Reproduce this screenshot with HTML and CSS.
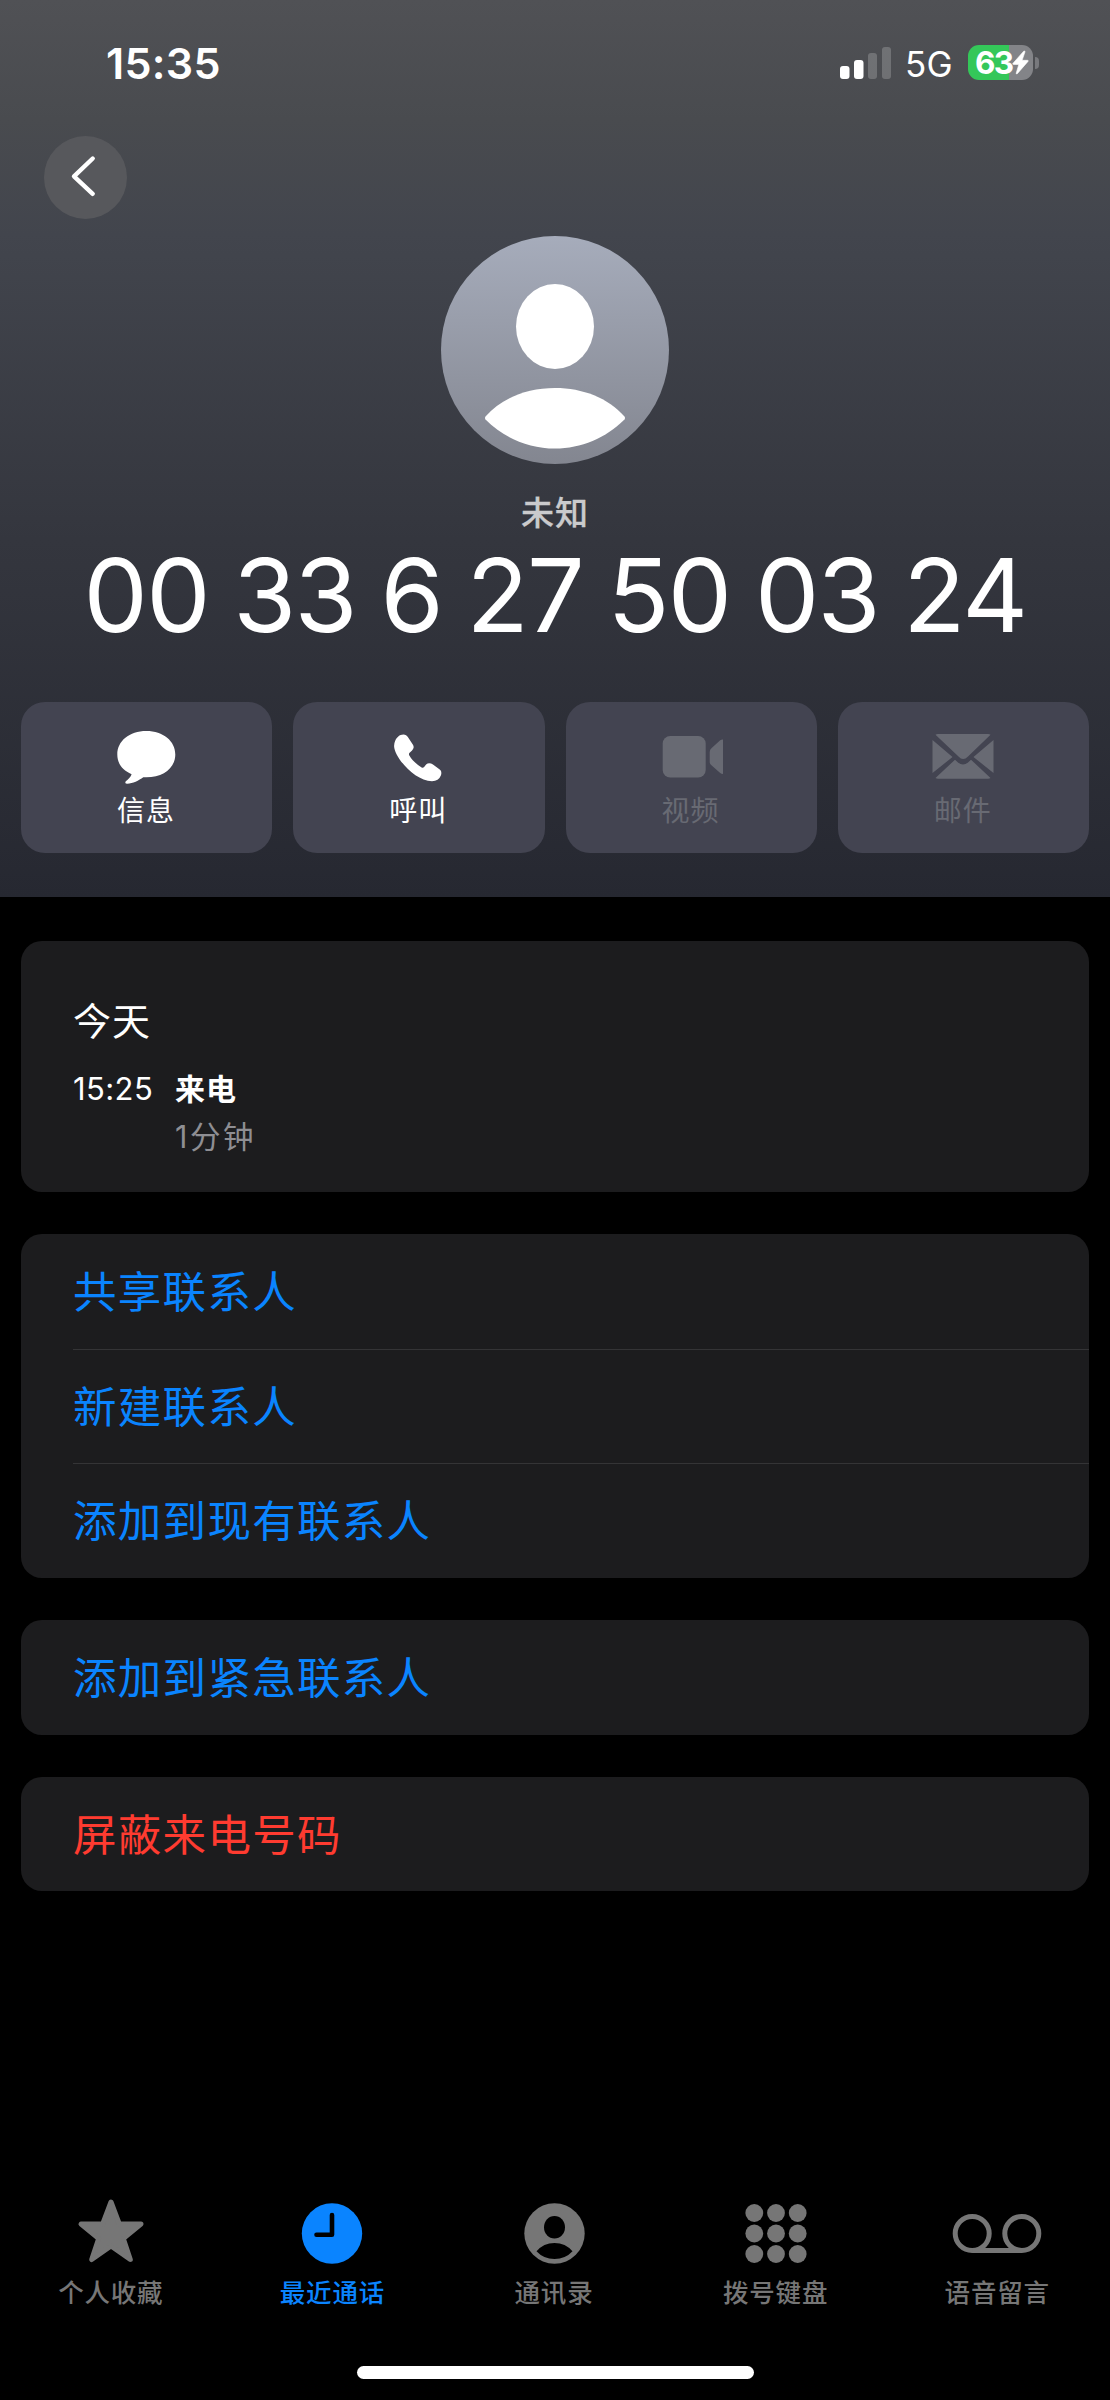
FILE: index.html
```html
<!DOCTYPE html>
<html lang="zh-CN">
<head>
<meta charset="utf-8">
<title>通话详情</title>
<link rel="stylesheet" href="styles.css">
</head>
<body>
<div class="screen">
  <header class="hero">
    <div class="status">
      <span class="time">15:35</span>
      <div class="indicators">
        <svg class="signal" width="51" height="34" viewBox="0 0 51 34" fill="#fff">
          <rect x="0" y="20" width="9.5" height="13" rx="3"/>
          <rect x="14" y="14" width="9.5" height="19" rx="3"/>
          <g fill-opacity=".2"><rect x="28" y="7" width="9" height="26" rx="3"/><rect x="42" y="1" width="9" height="32" rx="3"/></g>
        </svg>
        <span class="network">5G</span>
        <div class="battery">
          <span class="level">63</span>
          <svg width="17" height="25" viewBox="0 0 17 25"><path d="M11.7 1.2 1 13.3Q.3 14.4 1.6 14.4H6.8L4.2 23.2Q4.2 24.4 5.3 23.7L16 11.4Q16.7 10.3 15.4 10.3H10.1L13 1.8Q12.9.4 11.7 1.2Z" fill="#fff" stroke="#fff" stroke-width=".6"/></svg>
        </div>
        <span class="battery-cap"></span>
      </div>
    </div>
    <button class="back" aria-label="返回">
      <svg width="83" height="83" viewBox="0 0 83 83"><path d="M48.7 22.500 30 40.300 48.700 57.800" fill="none" stroke="#fff" stroke-width="4.4" stroke-linecap="round" stroke-linejoin="round"/></svg>
    </button>
    <svg class="avatar" width="228" height="228" viewBox="0 0 228 228">
      <defs><linearGradient id="avatar-fill" x2="0" y2="1"><stop stop-color="#a6acbb"/><stop offset="1" stop-color="#838690"/></linearGradient></defs>
      <circle cx="114" cy="114" r="114" fill="url(#avatar-fill)"/>
      <ellipse cx="114" cy="90.5" rx="39" ry="42.5" fill="#fff"/>
      <path d="M44.500 180.500C61 162 86 152 114 152S167 162 183.500 180.500Q184.500 182 183.500 183.500C165 202 140 212.500 114 212.500S63 202 44.500 183.500Q43.500 182 44.500 180.500Z" fill="#fff"/>
    </svg>
    <div class="caller">未知</div>
    <h1 class="number">00 33 6 27 50 03 24</h1>
    <div class="actions">
      <button class="action">
        <svg width="64" height="60" viewBox="0 0 64 60"><path d="M32 4C49 4 61 14 61 27.500S49 50.300 32 50.300H29C24.500 53.500 18.500 56.700 13 56.700Q10 56.700 11.500 54.300C14 52.500 16.500 50 17.300 47.300 8 43 3 36.500 3 27.500 3 14 15 4 32 4Z" transform="translate(-.7 0)" fill="currentColor"/></svg>
        <span>信息</span>
      </button>
      <button class="action">
        <svg width="64" height="60" viewBox="0 0 64 60"><path d="M9.500 15C11 11 14 8 18 8 20 8 21.500 9 23 11.500L27.500 18.500C29 21 28.500 23 26.500 25L24 27.500Q23.300 28.500 24 30C26.500 34.500 31.500 39.500 36.500 42.500Q37.800 43.200 39 42L41 39.500C43 37.500 45.500 37.800 48 39.500L54.500 44.500C56.500 46 57 48 56 51 54.500 54.800 51.500 57 47 57 29 56.500 9 32 8.500 20Q8.500 17 9.500 15Z" transform="translate(-1.300 -.2) scale(.985 .955)" fill="currentColor"/></svg>
        <span>呼叫</span>
      </button>
      <button class="action disabled">
        <svg width="64" height="60" viewBox="0 0 64 60" fill="currentColor"><g transform="translate(2.700 -.5)"><rect x="1" y="9.500" width="43" height="41.500" rx="7.500"/><path d="M48 25.500Q48 23 50 21.500L58.500 13.800Q62.500 11.500 63 16V44.500Q62.500 49 58.500 46.500L50 39Q48 37.500 48 35.500Z"/></g></svg>
        <span>视频</span>
      </button>
      <button class="action disabled">
        <svg width="64" height="60" viewBox="0 0 64 60" fill="currentColor"><path d="M4.500 7.700Q5.500 7 7 7H57Q58.500 7 59.500 7.700L37 29.500Q32 34.500 27.500 29.500Z"/><path d="M1.500 13 1.500 46 21.500 30ZM62.500 13 42.500 30 62.500 46ZM4.500 51 24 32.700 27 35.500Q32 39.500 37 35.500L40 32.700 59.500 51Q58.500 51.700 57 51.700H7Q5.500 51.700 4.500 51Z"/></svg>
        <span>邮件</span>
      </button>
    </div>
  </header>

  <main class="content">
    <section class="card log">
      <h2>今天</h2>
      <div class="entry">
        <time>15:25</time>
        <div class="detail"><strong>来电</strong><span>1分钟</span></div>
      </div>
    </section>
    <section class="card list">
      <a class="row">共享联系人</a>
      <a class="row">新建联系人</a>
      <a class="row">添加到现有联系人</a>
    </section>
    <section class="card list"><a class="row">添加到紧急联系人</a></section>
    <section class="card list"><a class="row danger">屏蔽来电号码</a></section>
  </main>

  <nav class="tabs">
    <a class="tab">
      <svg width="90" height="70" viewBox="0 0 90 70"><path d="M45 7 53.300 29H75L57.300 43.500 64.300 64.500 45 51 25.700 64.500 32.700 43.500 15 29H36.700Z" fill="currentColor" stroke="currentColor" stroke-width="5" stroke-linejoin="round"/></svg>
      <span>个人收藏</span>
    </a>
    <a class="tab active">
      <svg width="90" height="70" viewBox="0 0 90 70"><circle cx="45" cy="38.500" r="30.200" fill="currentColor"/><path d="M45 20V39.700H29.500" fill="none" stroke="#000" stroke-width="4.600" stroke-linecap="round" stroke-linejoin="round"/></svg>
      <span>最近通话</span>
    </a>
    <a class="tab">
      <svg width="90" height="70" viewBox="0 0 90 70"><circle cx="45.500" cy="38.500" r="30.200" fill="currentColor"/><ellipse cx="45.500" cy="32.300" rx="10.500" ry="11.300"/><path d="M27.500 56.300Q34.500 48 45.500 48T63.500 56.300Q56.500 64 45.500 64T27.500 56.300Z"/></svg>
      <span>通讯录</span>
    </a>
    <a class="tab">
      <svg width="90" height="70" viewBox="0 0 90 70" fill="currentColor"><circle cx="23.300" cy="18" r="8.900"/><circle cx="45" cy="18" r="8.900"/><circle cx="66.700" cy="18" r="8.900"/><circle cx="23.300" cy="38.500" r="8.900"/><circle cx="45" cy="38.500" r="8.900"/><circle cx="66.700" cy="38.500" r="8.900"/><circle cx="23.300" cy="59" r="8.900"/><circle cx="45" cy="59" r="8.900"/><circle cx="66.700" cy="59" r="8.900"/></svg>
      <span>拨号键盘</span>
    </a>
    <a class="tab">
      <svg width="90" height="70" viewBox="0 0 90 70" fill="none" stroke="currentColor" stroke-width="5"><circle cx="20.200" cy="38.500" r="17"/><circle cx="69.800" cy="38.500" r="17"/><path d="M20.200 55.500H69.800"/></svg>
      <span>语音留言</span>
    </a>
  </nav>
  <div class="home-indicator"></div>
</div>
</body>
</html>
```
FILE: styles.css
```css
* { box-sizing: border-box; margin: 0; padding: 0; }

body {
  background: #000;
  color: #fff;
  font-family: Inter, "Noto Sans CJK SC", sans-serif;
}

svg { display: block; }

button { border: 0; color: inherit; font: inherit; }

.screen {
  width: 1110px;
  height: 2400px;
  display: flex;
  flex-direction: column;
  overflow: hidden;
}

.hero {
  height: 897px;
  flex: none;
  display: flex;
  flex-direction: column;
  background: linear-gradient(#505155 0, #494b4f 120px, #42454d 235px, #34363e 540px, #262831 897px);
}

.status {
  height: 136px;
  flex: none;
  padding: 36px 71px 0 106px;
  display: flex;
  justify-content: space-between;
}

.time {
  font-size: 43px;
  line-height: 54px;
  font-weight: 600;
  letter-spacing: .3px;
}

.indicators { display: flex; align-items: flex-start; }

.signal { margin-top: 10px; }

.network {
  margin: 6px 0 0 14px;
  width: 63px;
  font-size: 35px;
  line-height: 44px;
  letter-spacing: .2px;
}

.battery {
  margin-top: 9px;
  width: 65px;
  height: 35px;
  padding-left: 7px;
  display: flex;
  align-items: center;
  border-radius: 11px;
  background: linear-gradient(90deg, #34c759 41px, #838488 41px);
}

.level {
  width: 37px;
  font-size: 31.500px;
  line-height: 35px;
  font-weight: 700;
  letter-spacing: -1.800px;
}

.battery-cap {
  margin: 21px 0 0 2px;
  width: 4px;
  height: 12px;
  border-radius: 0 4px 4px 0;
  background: #78797d;
}

.back {
  margin-left: 44px;
  width: 83px;
  height: 83px;
  flex: none;
  border-radius: 50%;
  background: #57585c;
}

.avatar { align-self: center; margin-top: 17px; flex: none; }

.caller {
  margin-top: 26px;
  text-align: center;
  color: #cacacc;
  font-size: 33px;
  line-height: 46px;
  font-weight: 500;
  letter-spacing: 1px;
  -webkit-text-stroke: .3px #cacacc;
}

.number {
  height: 166px;
  text-align: center;
  white-space: nowrap;
  font-size: 102px;
  line-height: 119px;
  font-weight: 400;
  letter-spacing: -1.700px;
  word-spacing: -2.500px;
}

.actions {
  padding: 0 21px;
  display: grid;
  grid-template-columns: repeat(4, 1fr);
  gap: 21px;
}

.action {
  height: 151px;
  padding-top: 25px;
  display: flex;
  flex-direction: column;
  align-items: center;
  border-radius: 24px;
  background: #434451;
  font-size: 28px;
  line-height: 40px;
  letter-spacing: 1px;
}

.action svg { flex: none; }
.action span { margin: 4px 1px 0 0; }
.disabled { color: #686a73; }

.content {
  flex: 1;
  padding: 44px 21px 0;
  display: flex;
  flex-direction: column;
  gap: 42px;
}

.card {
  border-radius: 21px;
  background: #1c1c1e;
}

.log { height: 251px; padding: 55px 52px 0; }

.log h2 {
  font-size: 38px;
  line-height: 50px;
  font-weight: 400;
  letter-spacing: 1px;
}

.entry {
  margin-top: 19px;
  display: flex;
  font-size: 31px;
  line-height: 48px;
}

.entry time { width: 102px; letter-spacing: .4px; }
.detail { display: flex; flex-direction: column; }
.detail strong { font-weight: 700; font-size: 30px; letter-spacing: 1px; }
.detail span { color: #8e8e93; font-size: 30.500px; letter-spacing: 2.600px; }

.list { padding-left: 52px; }

.row {
  display: block;
  height: 114.700px;
  color: #0a84ff;
  font-size: 43.500px;
  line-height: 116px;
  letter-spacing: 1.300px;
}

.row + .row { border-top: 1px solid #343436; line-height: 115px; }
.danger { color: #ff3b30; }

.tabs {
  height: 171px;
  padding-right: 2px;
  display: grid;
  grid-template-columns: repeat(5, 1fr);
}

.tab {
  display: flex;
  flex-direction: column;
  align-items: center;
  color: #767676;
  font-size: 25.500px;
  line-height: 36px;
  font-weight: 500;
  letter-spacing: .8px;
}

.tab span { margin-top: 10px; }
.active { color: #0a84ff; }

.home-indicator {
  margin: 0 auto 21px;
  width: 397px;
  height: 13px;
  flex: none;
  border-radius: 7px;
  background: #fff;
}
```
